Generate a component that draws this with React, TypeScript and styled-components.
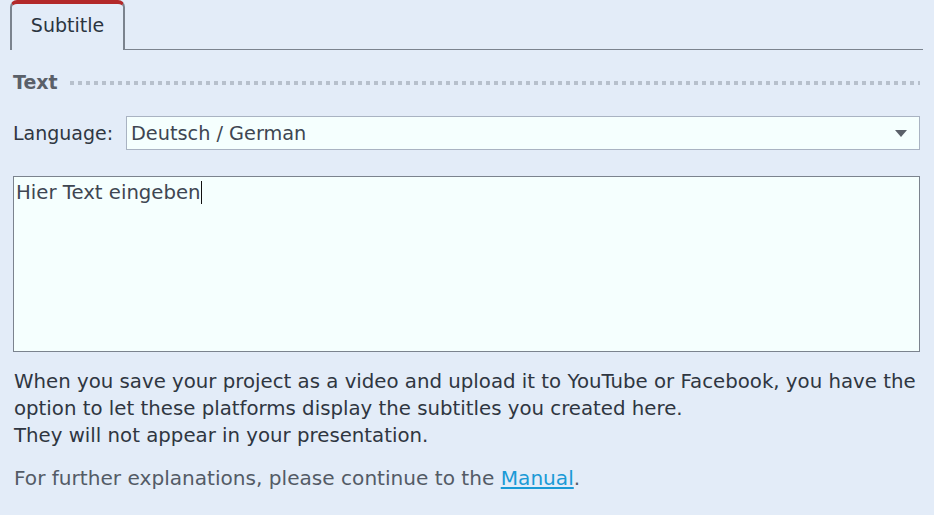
import React from "react";
import styled, { createGlobalStyle } from "styled-components";

const Global = createGlobalStyle`
  html, body { margin: 0; padding: 0; }
  body {
    background: #e3ecf8;
    font-family: "DejaVu Sans", Tahoma, sans-serif;
    color: #2f3641;
    width: 934px;
    height: 515px;
    overflow: hidden;
  }
`;

const Page = styled.div`
  display: flex;
  flex-direction: column;
  padding: 0 11px 0 10px;
`;

const TabBar = styled.div`
  display: flex;
  align-items: flex-end;
  height: 50px;
  border-bottom: 1px solid #7b838e;
  box-sizing: border-box;
`;

const Tab = styled.div`
  width: 115px;
  height: 50px;
  box-sizing: border-box;
  margin-bottom: -1px;
  background: #e3ecf8;
  border: 2px solid #7b838e;
  border-top: 4px solid #b3292a;
  border-bottom: none;
  border-radius: 7px 7px 0 0;
  display: flex;
  align-items: center;
  justify-content: center;
  padding-bottom: 4px;
  font-size: 19px;
  color: #2b3440;
`;

const Section = styled.div`
  display: flex;
  flex-direction: column;
  padding-left: 3px;
`;

const SectionHeader = styled.div`
  display: flex;
  align-items: center;
  gap: 12px;
  height: 30px;
  margin-top: 17px;
`;

const SectionTitle = styled.span`
  font-size: 19px;
  font-weight: bold;
  color: #5a6069;
`;

const Dots = styled.div`
  flex: 1;
  height: 4px;
  margin-right: 3px;
  margin-top: 2px;
  background-image: linear-gradient(to right, #b7c0cc 0 4px, transparent 4px 8px);
  background-size: 8px 4px;
  background-repeat: repeat-x;
`;

const Row = styled.div`
  display: flex;
  align-items: center;
  margin-top: 19px;
  margin-right: 3px;
`;

const Label = styled.span`
  font-size: 19px;
  width: 113px;
  color: #2f3641;
`;

const Select = styled.div`
  flex: 1;
  height: 34px;
  box-sizing: border-box;
  border: 1px solid #a9b3c2;
  background: #f5fffe;
  display: flex;
  align-items: center;
  justify-content: space-between;
  padding: 0 12px 0 4px;
  font-size: 19.3px;
  color: #3e4652;
`;

const Arrow = styled.svg`
  width: 12px;
  height: 7px;
  display: block;
`;

const TextArea = styled.div`
  margin-top: 26px;
  margin-right: 3px;
  height: 176px;
  box-sizing: border-box;
  border: 1px solid #7b838e;
  background: #f5fffe;
  padding: 2px 2px;
  font-size: 19.7px;
  color: #3e4652;
  line-height: 27px;
`;

const Caret = styled.span`
  display: inline-block;
  width: 1px;
  height: 23px;
  background: #111;
  vertical-align: -5px;
`;

const Info = styled.p`
  margin: 16px 0 0 1px;
  font-size: 19.75px;
  line-height: 27px;
  color: #2f3641;
`;

const Hint = styled.p`
  margin: 16px 0 0 1px;
  font-size: 20.1px;
  line-height: 27px;
  color: #535b66;
`;

const Link = styled.a`
  color: #1a9ad6;
  text-decoration: underline;
  cursor: pointer;
`;

export default function App() {
  return (
    <>
      <Global />
      <Page>
        <TabBar>
          <Tab>Subtitle</Tab>
        </TabBar>
        <Section>
          <SectionHeader>
            <SectionTitle>Text</SectionTitle>
            <Dots />
          </SectionHeader>
          <Row>
            <Label>Language:</Label>
            <Select>
              <span>Deutsch / German</span>
              <Arrow viewBox="0 0 12 7">
                <path d="M0 0 H12 L6 7 Z" fill="#5a6069" />
              </Arrow>
            </Select>
          </Row>
          <TextArea>
            Hier Text eingeben<Caret />
          </TextArea>
          <Info>
            When you save your project as a video and upload it to YouTube or Facebook, you have the
            <br />
            option to let these platforms display the subtitles you created here.
            <br />
            They will not appear in your presentation.
          </Info>
          <Hint>
            For further explanations, please continue to the <Link>Manual</Link>.
          </Hint>
        </Section>
      </Page>
    </>
  );
}
